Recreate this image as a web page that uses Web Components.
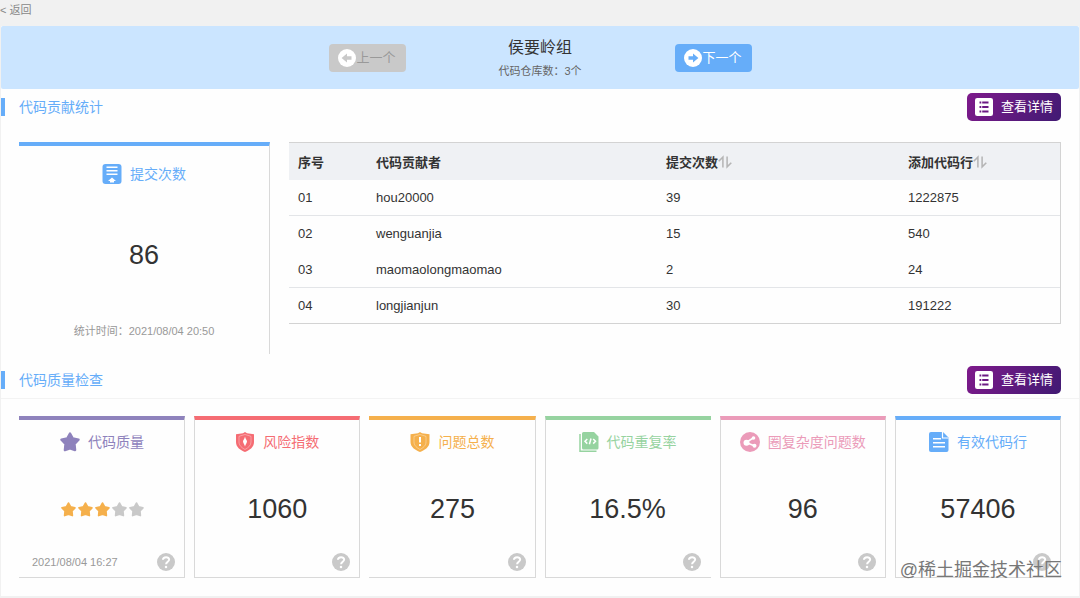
<!DOCTYPE html>
<html lang="zh-CN">
<head>
<meta charset="utf-8">
<title>侯要岭组</title>
<style>
  body {
    margin: 0;
    background: #f1f1f1;
    color: #333;
    font-family: "Liberation Sans", "Noto Sans CJK SC", sans-serif;
    font-size: 13px;
  }
</style>
</head>
<body>
<team-report></team-report>

<script>
// shapes of the icons, all drawn on a 20x20 box
const ICONS = {
  prev: `<circle cx="10" cy="10" r="10" fill="#fff"/><path d="M4 10l6-5v3h5v4h-5v3z"/>`,
  next: `<circle cx="10" cy="10" r="10" fill="#fff"/><path d="M16 10l-6-5v3H5v4h5v3z"/>`,
  list: `<rect width="20" height="20" rx="2.500" fill="#fff"/><path d="M5 4h2v2H5zM8 4h7v2H8zM5 9h2v2H5zM8 9h7v2H8zM5 14h2v2H5zM8 14h7v2H8z"/>`,
  commit: `<rect x=".5" width="19" height="20" rx="3"/><path d="M4.500 2.500h11V4h-11zM4.500 6h11v1.500h-11zM4.500 9.500h11V11h-11zM10 13.500l4 3.500h-2v1.500H8V17H6z" fill="#fff"/>`,
  star: `<path d="M10 1.500l2.800 5 5.700 1.200-4 4.300.6 6-5.100-1.700L4.900 18l.6-6-4-4.300 5.700-1.200z" stroke="currentColor" stroke-width="2.400" stroke-linejoin="round"/>`,
  risk: `<path d="M10 0l2 1.200 7 1V10c0 5-4 8-9 10-5-2-9-5-9-10V2.200l7-1z"/><path d="M10 2.500l6 1.800V10c0 3.500-3 6-6 7.500-3-1.500-6-4-6-7.500V4.300z" fill="none" stroke="#fff" stroke-opacity=".35"/><path d="M10 4.500c.5 2.500 2 3.500 2 5s-1.500 2.500-2 5c-.5-2.500-2-3.500-2-5s1.500-2.500 2-5z" fill="#fff"/>`,
  issue: `<path d="M10 0l2 1.200 7.500 1V10c0 5-4.500 8-9.500 10C5 18 .5 15 .5 10V2.200l7.500-1z"/><path d="M10 2.500l6 1.800V10c0 3.500-3 6-6 7.500-3-1.500-6-4-6-7.500V4.300z" fill="none" stroke="#fff" stroke-opacity=".35"/><path d="M9 5h2v5.500H9zM9 12h2v2H9z" fill="#fff"/>`,
  repeat: `<path d="M4.500 0H15l4.500 4.500V16a1.500 1.500 0 0 1-1.500 1.500H4.500A1.500 1.500 0 0 1 3 16V1.500A1.500 1.500 0 0 1 4.500 0z"/><path d="M1 2v17.200h16.500" fill="none" stroke="currentColor" stroke-width="1.500"/><path d="M8.300 7L6 9.300l2.300 2.300M14.200 7l2.300 2.300-2.300 2.300M12 6.500l-1.600 5.800" fill="none" stroke="#fff" stroke-width="1.500"/>`,
  complex: `<circle cx="10" cy="10" r="10"/><path d="M14 5.500l-8 5 9 3.500" fill="none" stroke="#fff" stroke-width="1.600"/><g fill="#fff"><circle cx="13.500" cy="6" r="1.800"/><circle cx="6.500" cy="10.800" r="3"/><circle cx="14.500" cy="13.800" r="2"/></g>`,
  lines: `<path d="M2 0h12l5.500 5.500V18a2 2 0 0 1-2 2H2a2 2 0 0 1-2-2V2a2 2 0 0 1 2-2z"/><path d="M13.500 0v6h6" fill="none" stroke="#fff" stroke-width="1.200"/><path d="M4 6h8v1.500H4zM4 10h12v1.500H4zM4 14h12v1.500H4z" fill="#fff"/>`,
  help: `<circle cx="10" cy="10" r="10"/><path d="M6.600 7.500C6.800 3.600 13.700 3.800 13.500 7.500c-.2 2.200-3.400 2.300-3.400 5" fill="none" stroke="#fff" stroke-width="2.200"/><circle cx="10" cy="15.500" r="1.400" fill="#fff"/>`,
  sort: `<path d="M1 9l6-6v15M19 11l-6 6V2" fill="none" stroke="currentColor" stroke-width="2.200"/>`
};

// <ui-icon name="star"> takes its colour from the text around it
class UiIcon extends HTMLElement {
  constructor() {
    super();
    this.attachShadow({ mode: 'open' });
  }

  connectedCallback() {
    this.shadowRoot.innerHTML = `
      <style>
        :host { display: block; flex: none; width: var(--icon-size, 18px); height: var(--icon-size, 18px); }
        svg { display: block; width: 100%; height: 100%; }
      </style>
      <svg viewBox="0 0 20 20" fill="currentColor" aria-hidden="true">${ICONS[this.getAttribute('name')]}</svg>
    `;
  }
}
customElements.define('ui-icon', UiIcon);

// the group name with the buttons to the previous and next group
class GroupBanner extends HTMLElement {
  constructor() {
    super();
    this.attachShadow({ mode: 'open' });
    this.shadowRoot.innerHTML = `
      <style>
        :host {
          display: grid;
          grid-template-columns: 77px 269px 77px;
          justify-content: center;
          align-items: center;
          height: 63px;
          border-radius: 2px;
          background: #cbe5ff;
          text-align: center;
        }
        button {
          display: flex;
          align-items: center;
          justify-content: center;
          height: 28px;
          padding: 0;
          border: 0;
          border-radius: 4px;
          background: #66adf9;
          color: #fff;
          font: inherit;
          line-height: 18px;
        }
        button:disabled { background: #c9c9c9; color: #999; }
        ui-icon { color: #66adf9; }
        button:disabled ui-icon { color: #c9c9c9; }
        h1 { margin: 0; padding-top: 2px; font-size: 16px; font-weight: 400; line-height: 24px; }
        p { margin: 0; font-size: 11px; line-height: 22px; color: #666; }
      </style>
      <button type="button" disabled><ui-icon name="prev"></ui-icon>上一个</button>
      <div>
        <h1><slot name="title"></slot></h1>
        <p><slot></slot></p>
      </div>
      <button type="button"><ui-icon name="next"></ui-icon>下一个</button>
    `;
  }
}
customElements.define('group-banner', GroupBanner);

// section heading with a details button at its right
class SectionHead extends HTMLElement {
  constructor() {
    super();
    this.attachShadow({ mode: 'open' });
    this.shadowRoot.innerHTML = `
      <style>
        :host {
          display: flex;
          align-items: center;
          justify-content: space-between;
          height: 36px;
          padding-right: 18px;
        }
        h2 {
          margin: 0;
          padding-left: 14px;
          border-left: 4px solid #66adf9;
          color: #66adf9;
          font-size: 14px;
          font-weight: 400;
          line-height: 18px;
        }
        button {
          display: flex;
          align-items: center;
          gap: 8px;
          height: 28px;
          padding: 0 8px;
          border: 0;
          border-radius: 5px;
          background: linear-gradient(120deg, #7e1a8b, #411a73);
          color: #fff;
          font: inherit;
          line-height: 18px;
        }
        ui-icon { color: #6b1a83; }
      </style>
      <h2><slot></slot></h2>
      <button type="button"><ui-icon name="list"></ui-icon>查看详情</button>
    `;
  }
}
customElements.define('section-head', SectionHead);

// number of commits of the group
class CommitCard extends HTMLElement {
  constructor() {
    super();
    this.attachShadow({ mode: 'open' });
    this.shadowRoot.innerHTML = `
      <style>
        :host {
          display: grid;
          grid-template-rows: 24px 1fr 22px;
          box-sizing: border-box;
          height: 212px;
          padding: 16px 0 12px;
          border-top: 4px solid #66adf9;
          border-right: 1px solid #d9d9d9;
          text-align: center;
        }
        h3 {
          display: flex;
          align-items: center;
          justify-content: center;
          gap: 8px;
          margin: 0;
          color: #66adf9;
          font-size: 14px;
          font-weight: 400;
          line-height: 24px;
        }
        ui-icon { --icon-size: 20px; }
        strong { align-self: center; padding-top: 4px; font-size: 27px; font-weight: 400; }
        p { margin: 0; color: #999; font-size: 11px; line-height: 22px; }
      </style>
      <h3><ui-icon name="commit"></ui-icon>提交次数</h3>
      <strong><slot></slot></strong>
      <p><slot name="time"></slot></p>
    `;
  }
}
customElements.define('commit-card', CommitCard);

const CONTRIBUTORS = [
  ['01', 'hou20000', 39, 1222875],
  ['02', 'wenguanjia', 15, 540],
  ['03', 'maomaolongmaomao', 2, 24],
  ['04', 'longjianjun', 30, 191222]
];

class ContributorTable extends HTMLElement {
  constructor() {
    super();
    this.attachShadow({ mode: 'open' });

    const rows = CONTRIBUTORS.map(row => `<tr>${row.map(cell => `<td>${cell}</td>`).join('')}</tr>`).join('');

    this.shadowRoot.innerHTML = `
      <style>
        :host { display: block; }
        table {
          width: 100%;
          border: 1px solid #d3d3d3;
          border-left: 0;
          border-spacing: 0;
          table-layout: fixed;
          font-size: 13px;
        }
        th, td { height: 35px; padding: 0 9px; text-align: left; border-bottom: 1px solid #e3e5e8; }
        th { height: 37px; border-bottom: 0; background: #eff1f4; font-weight: 700; }
        th div { display: flex; align-items: center; }
        tr:nth-child(2) td { border-bottom-color: transparent; }
        tr:last-child td { border-bottom: 0; }
        ui-icon { --icon-size: 14px; color: #b5b5b5; }
        .no { width: 60px; }
        .who { width: 272px; }
        .count { width: 224px; }
      </style>
      <table>
        <thead>
          <tr>
            <th class="no">序号</th>
            <th class="who">代码贡献者</th>
            <th class="count"><div>提交次数<ui-icon name="sort"></ui-icon></div></th>
            <th><div>添加代码行<ui-icon name="sort"></ui-icon></div></th>
          </tr>
        </thead>
        <tbody>${rows}</tbody>
      </table>
    `;
  }
}
customElements.define('contributor-table', ContributorTable);

// one measure of code quality, coloured by --accent
class MetricCard extends HTMLElement {
  constructor() {
    super();
    this.attachShadow({ mode: 'open' });
  }

  connectedCallback() {
    this.shadowRoot.innerHTML = `
      <style>
        :host {
          display: grid;
          grid-template-rows: 24px 1fr 20px;
          box-sizing: border-box;
          height: 162px;
          border-top: 4px solid var(--accent);
        }
        :host, .value, footer { min-width: 0; }
        :host {
          padding: 10px 9px 5px;
          border-right: 1px solid #d9d9d9;
          border-bottom: 1px solid #d9d9d9;
          border-left: 1px solid #d9d9d9;
        }
        :host([open-left]) { border-left: 0; padding-left: 10px; }
        :host([open-right]) { border-right: 0; padding-right: 10px; }
        h3 {
          display: flex;
          align-items: center;
          justify-content: center;
          gap: 8px;
          margin: 0;
          color: var(--accent);
          font-size: 14px;
          font-weight: 400;
          line-height: 24px;
          white-space: nowrap;
        }
        h3 ui-icon { --icon-size: 20px; }
        .value { display: flex; align-items: center; justify-content: center; padding-top: 12px; font-size: 27px; }
        footer { display: flex; align-items: center; justify-content: space-between; padding-left: 3px; color: #999; font-size: 11px; }
        button { margin-left: auto; padding: 0; border: 0; background: none; color: #c9c9c9; }
      </style>
      <h3><ui-icon name="${this.getAttribute('icon')}"></ui-icon>${this.getAttribute('label')}</h3>
      <div class="value"><slot></slot></div>
      <footer>
        <slot name="time"></slot>
        <button type="button" aria-label="说明"><ui-icon name="help"></ui-icon></button>
      </footer>
    `;
  }
}
customElements.define('metric-card', MetricCard);

class StarRating extends HTMLElement {
  constructor() {
    super();
    this.attachShadow({ mode: 'open' });
  }

  connectedCallback() {
    const value = Number(this.getAttribute('value'));
    const stars = [1, 2, 3, 4, 5].map(n => `<ui-icon name="star" class="${n <= value ? 'on' : ''}"></ui-icon>`).join('');

    this.shadowRoot.innerHTML = `
      <style>
        :host { display: flex; gap: 2px; color: #c9c9c9; --icon-size: 15px; }
        .on { color: #f5b04c; }
      </style>
      ${stars}
    `;
  }
}
customElements.define('star-rating', StarRating);

// the whole page
class TeamReport extends HTMLElement {
  constructor() {
    super();
    this.attachShadow({ mode: 'open' });
    this.shadowRoot.innerHTML = `
      <style>
        :host { display: block; position: relative; }
        nav { height: 26px; line-height: 20px; font-size: 11px; }
        nav a { color: #888; text-decoration: none; }
        main { margin: 0 1px; padding-bottom: 18px; background: #fefefe; }
        .stats {
          display: grid;
          grid-template-columns: 251px 1fr;
          gap: 19px;
          padding: 17px 18px 8px;
        }
        .quality {
          display: grid;
          grid-template-columns: repeat(6, 1fr);
          gap: 9px;
          padding: 17px 18px 0;
          border-top: 1px solid #f3f3f3;
        }
        .mark {
          position: absolute;
          right: 18px;
          bottom: 14px;
          color: #777;
          font-size: 18px;
          line-height: 24px;
        }
      </style>
      <nav><a href="#">&lt; 返回</a></nav>
      <main>
        <group-banner><span slot="title">侯要岭组</span>代码仓库数：3个</group-banner>
        <section-head>代码贡献统计</section-head>
        <div class="stats">
          <commit-card>86<span slot="time">统计时间：2021/08/04 20:50</span></commit-card>
          <contributor-table></contributor-table>
        </div>
        <section-head>代码质量检查</section-head>
        <div class="quality">
          <metric-card icon="star" label="代码质量" open-left style="--accent: #8e82bc">
            <star-rating value="3"></star-rating>
            <span slot="time">2021/08/04 16:27</span>
          </metric-card>
          <metric-card icon="risk" label="风险指数" style="--accent: #f56c73">1060</metric-card>
          <metric-card icon="issue" label="问题总数" open-left style="--accent: #f5b04c">275</metric-card>
          <metric-card icon="repeat" label="代码重复率" open-right style="--accent: #96d3a0">16.5%</metric-card>
          <metric-card icon="complex" label="圈复杂度问题数" style="--accent: #eb9bb9">96</metric-card>
          <metric-card icon="lines" label="有效代码行" style="--accent: #66adf9">57406</metric-card>
        </div>
      </main>
      <div class="mark">@稀土掘金技术社区</div>
    `;
  }
}
customElements.define('team-report', TeamReport);
</script>
</body>
</html>
